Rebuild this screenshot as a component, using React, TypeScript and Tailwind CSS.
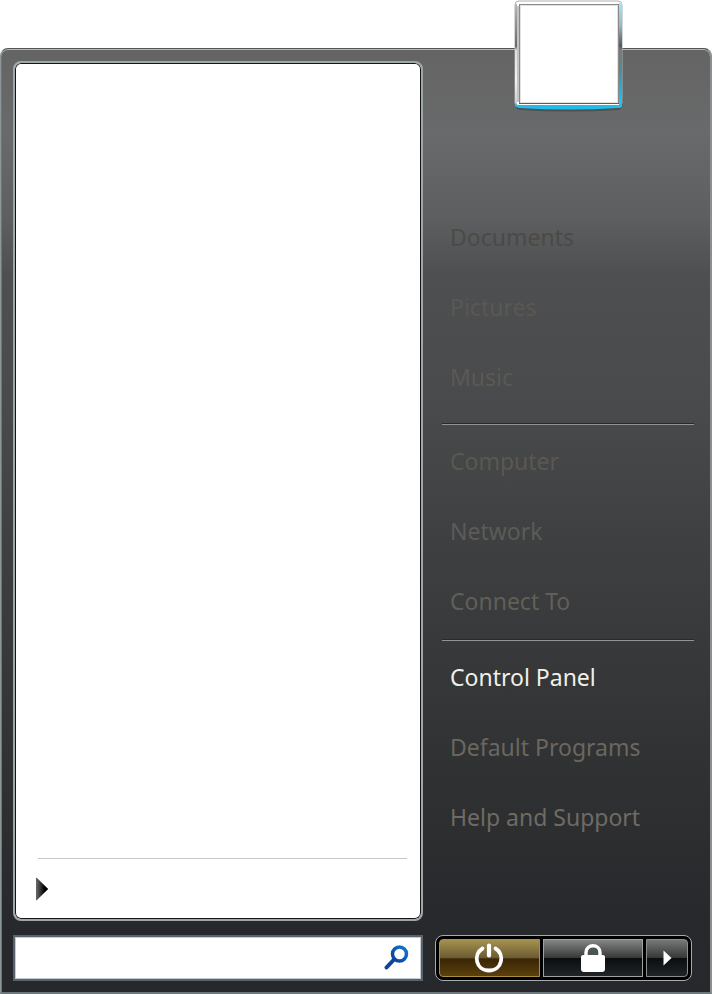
import React from "react";

const groups: string[][] = [
  ["Documents", "Pictures", "Music"],
  ["Computer", "Network", "Connect To"],
  ["Control Panel", "Default Programs", "Help and Support"],
];

const tones: Record<string, string> = {
  Documents: "text-[#4b4a47]",
  Pictures: "text-[#5a5855]",
  Music: "text-[#5b5954]",
  Computer: "text-[#5b5850]",
  Network: "text-[#5c5b57]",
  "Connect To": "text-[#625f58]",
  "Control Panel": "text-[#f2efe7]",
  "Default Programs": "text-[#6b6760]",
  "Help and Support": "text-[#6f6b64]",
};

function PowerIcon() {
  return (
    <svg width="30" height="32" viewBox="0 0 30 32" fill="none" stroke="white" strokeLinecap="round" aria-hidden="true">
      <path d="M8.500 6.500C-1 12 1.500 28.500 15 28.500S31 12 21.500 6.500" strokeWidth="3.800" />
      <path d="M15 3.500V13.500" strokeWidth="4.200" />
    </svg>
  );
}

function LockIcon() {
  return (
    <svg width="26" height="30" viewBox="0 0 26 30" aria-hidden="true">
      <path d="M6 14V9.500C6 0.500 20 0.500 20 9.500V14" fill="#4a5552" stroke="white" strokeWidth="3.400" />
      <path d="M3 12H23Q25 12 25 14V26Q25 29 22 29H4Q1 29 1 26V14Q1 12 3 12Z" fill="white" />
    </svg>
  );
}

function SearchIcon() {
  return (
    <svg width="26" height="26" viewBox="0 0 26 26" fill="none" aria-hidden="true">
      <defs>
        <linearGradient id="lens" x1="0" y1="1" x2="1" y2="0">
          <stop offset="0" stopColor="#0b3d94" />
          <stop offset="1" stopColor="#1478d4" />
        </linearGradient>
      </defs>
      <path d="M3.500 22.500L11 14.500" stroke="#0d4499" strokeWidth="4" strokeLinecap="round" />
      <circle cx="16.500" cy="9" r="7" stroke="url(#lens)" strokeWidth="3.500" />
    </svg>
  );
}

function Avatar() {
  return (
    <svg className="absolute -top-[49px] left-[90px]" width="112" height="114" viewBox="0 0 112 114" aria-hidden="true">
      <defs>
        <linearGradient id="leftEdge" gradientUnits="userSpaceOnUse" x1="0" y1="3" x2="0" y2="106">
          <stop offset="0" stopColor="#b9b9b9" />
          <stop offset="0.420" stopColor="#686868" />
          <stop offset="0.460" stopColor="#dcdce4" />
          <stop offset="0.750" stopColor="#f2f2f6" />
          <stop offset="1" stopColor="#c5cdd2" />
        </linearGradient>
        <linearGradient id="rightEdge" x1="0" y1="0" x2="0" y2="1">
          <stop offset="0" stopColor="#9ceafa" />
          <stop offset="0.220" stopColor="#9bb9c1" />
          <stop offset="0.420" stopColor="#4f5b5f" />
          <stop offset="0.460" stopColor="#777979" />
          <stop offset="0.650" stopColor="#5a8796" />
          <stop offset="0.850" stopColor="#18b4e4" />
          <stop offset="1" stopColor="#25c8f6" />
        </linearGradient>
      </defs>
      <path d="M2 100Q2 110 7 110Q56 113 106 110Q110 109 110 98Z" fill="#393939" opacity="0.500" />
      <rect x="2" y="1" width="107" height="106" rx="4" fill="white" stroke="#aeb0b4" />
      <path d="M3 4V104" stroke="url(#leftEdge)" strokeWidth="2" />
      <path d="M5 6V102" stroke="#8a8684" strokeWidth="1" />
      <rect x="106" y="3" width="3" height="102" fill="url(#rightEdge)" />
      <path d="M2 103L5 105H106L109 103V106Q109 108 105 108Q56 111 6 108Q2 107 2 103Z" fill="#20bdeb" />
      <rect x="6.500" y="4.500" width="99" height="99" fill="white" stroke="#8d8785" />
      <path d="M6 103.500H106" stroke="#844d3d" />
      <rect x="7.500" y="5.500" width="97" height="97" fill="white" stroke="#e4e1df" />
    </svg>
  );
}

export default function App() {
  return (
    <div className="flex min-h-screen flex-col bg-white pt-12 font-['Noto_Sans','Open_Sans',sans-serif]">
      <main className="grid flex-1 grid-cols-[minmax(0,1fr)_287px] rounded-t-[8px] border border-r-2 border-b-2 border-t-[#555555] border-r-[#8c8e8f] border-b-[#6d787c] border-l-[#8d9698] bg-[linear-gradient(#646464,#696a6b_9%,#5c5e5f_18%,#4d4f50_24%,#484a4b_38%,#3d3f40_53%,#303233_75%,#27292c_92%,#26282b)] shadow-[inset_0_1px_0_#b5b8b7,inset_1px_0_0_#6c7679]">
        <section className="flex flex-col pt-3 pb-[11px] pl-3">
          <div className="flex flex-1 flex-col justify-end rounded-[8px] border-2 border-[#a0a7a9] bg-white shadow-[inset_0_0_0_1px_#151515]">
            <div className="mr-[14px] ml-[23px] border-t border-[#c5c5cb]" />
            <button type="button" aria-label="All programs" className="flex h-[60px] items-center pl-[21px]">
              <svg width="12" height="24" viewBox="0 0 12 24" aria-hidden="true">
                <defs>
                  <linearGradient id="arrow">
                    <stop offset="0" stopColor="#686868" />
                    <stop offset="0.700" stopColor="#000000" />
                  </linearGradient>
                </defs>
                <path d="M0.500 1L12 12L0.500 23Z" fill="url(#arrow)" stroke="#111111" strokeWidth="0.500" />
              </svg>
            </button>
          </div>
          <form className="mt-[14px] flex h-[46px] items-center border-2 border-[#59616a] bg-white pr-3 shadow-[inset_0_0_0_1px_#c5cbd5]" onSubmit={(e) => e.preventDefault()}>
            <input type="text" aria-label="Search" className="h-full min-w-0 flex-1 bg-transparent px-3 text-xl outline-none" />
            <button type="submit" aria-label="Search">
              <SearchIcon />
            </button>
          </form>
        </section>

        <aside className="relative flex flex-col pt-[153px] pb-[11px]">
          <Avatar />
          <nav className="flex-1">
            {groups.map((items, i) => (
              <React.Fragment key={items[0]}>
                {i > 0 && (
                  <hr className={`mr-4 mb-px ml-[19px] h-0.5 border-t border-b border-t-[#28292b] border-b-[#929392] ${i === 1 ? "mt-[11px]" : "mt-[3px]"}`} />
                )}
                <ul>
                  {items.map((item) => (
                    <li key={item}>
                      <a href="#" className={`flex h-[70px] items-center pl-[27px] text-[23px] ${tones[item]}`}>
                        {item}
                      </a>
                    </li>
                  ))}
                </ul>
              </React.Fragment>
            ))}
          </nav>
          <div className="mr-[18px] ml-3 flex h-[46px] gap-[3px] rounded-[8px] border border-[#a3adaf] bg-black p-[3px]">
            <button type="button" aria-label="Shut down" className="flex flex-1 items-center justify-center rounded-l-[4px] border border-[#a88d43] bg-[linear-gradient(#a59250,#6b5a30_50%,#3a2606_52%,#5a400c)]">
              <PowerIcon />
            </button>
            <button type="button" aria-label="Lock" className="flex flex-1 items-center justify-center border border-[#a1a3a3] bg-[linear-gradient(#858585,#353737_50%,#0b0e10_51%,#202426)]">
              <LockIcon />
            </button>
            <button type="button" aria-label="More options" className="flex w-[42px] items-center justify-center rounded-r-[4px] border border-[#8c8e8e] bg-[linear-gradient(#777777,#353737_50%,#0b0e10_51%,#202426)]">
              <svg width="9" height="16" viewBox="0 0 9 16" aria-hidden="true">
                <path d="M0.500 0.500L8.500 8L0.500 15.500Z" fill="white" />
              </svg>
            </button>
          </div>
        </aside>
      </main>
    </div>
  );
}
